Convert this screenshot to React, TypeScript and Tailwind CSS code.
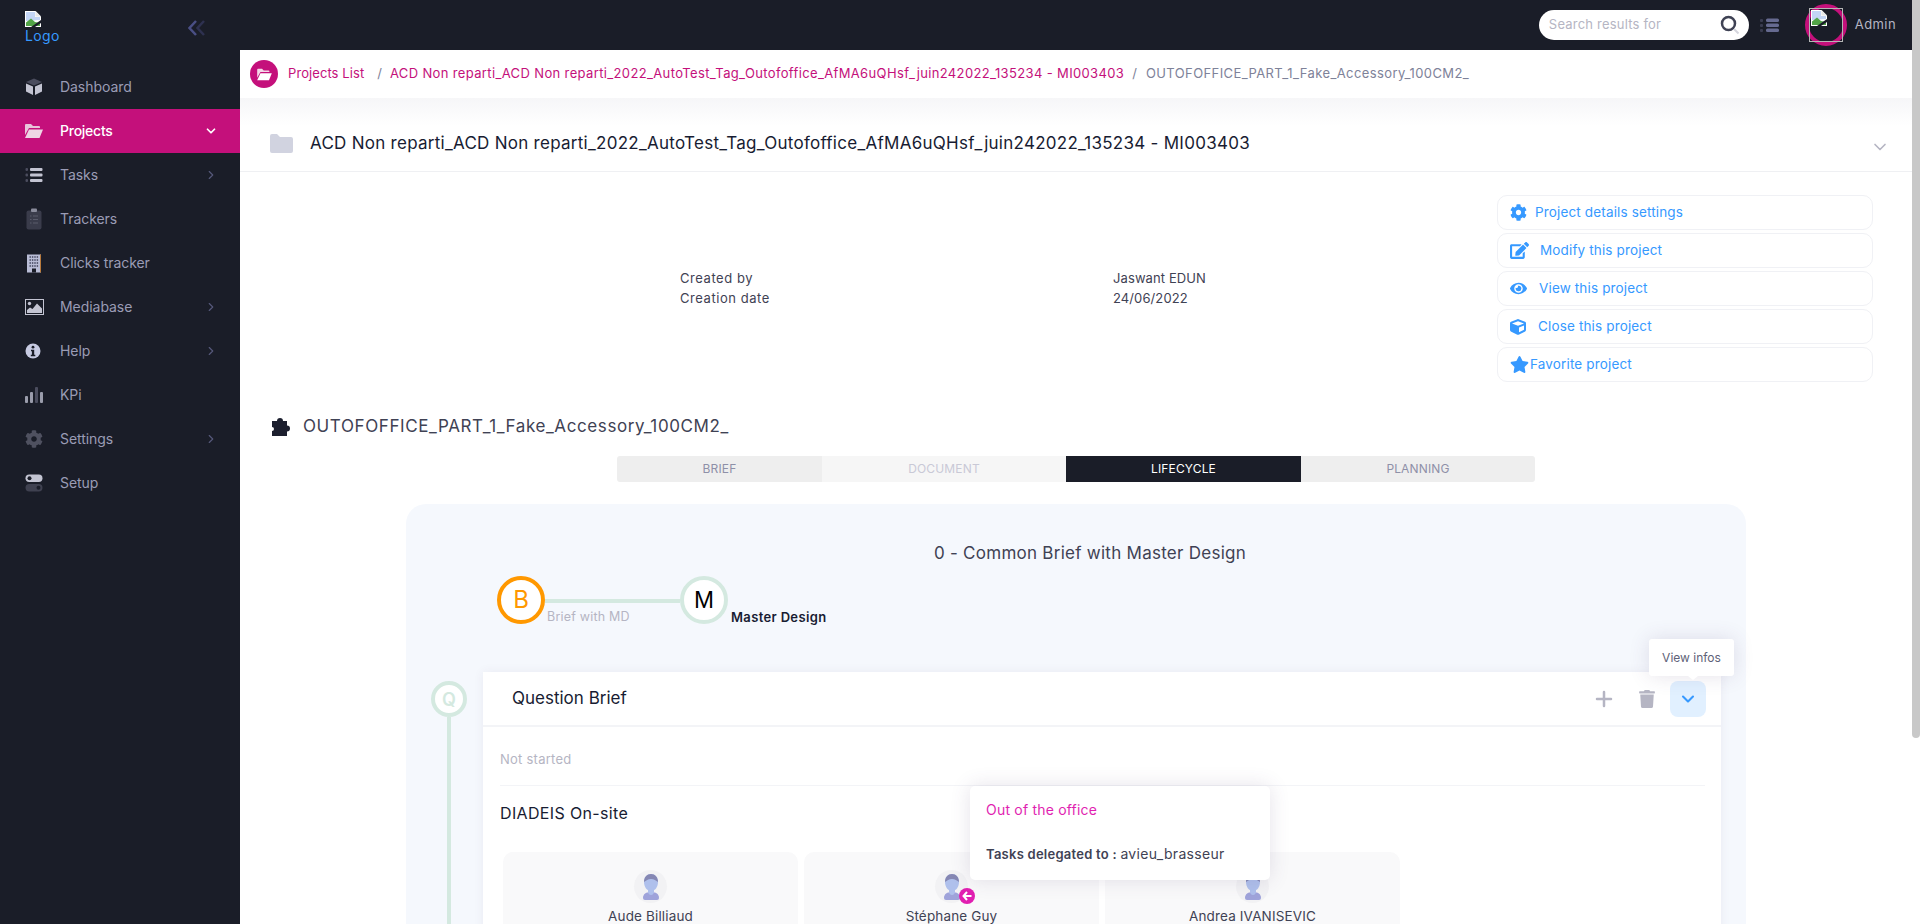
import React from 'react';
import { FaCog, FaEdit, FaEye, FaCube, FaStar, FaTrash } from 'react-icons/fa';
import { ChevronDown, ChevronRight, Plus } from 'lucide-react';

// Chrome's "image failed to load" glyph
const BrokenImage = () => (
  <svg width="16" height="16" viewBox="0 0 16 16" className="shrink-0">
    <path d="M0 0h10.5L16 5.5V16H0z" fill="#fff" />
    <path d="M1 1h9v5h5v3L1 10z" fill="#c3d5f5" />
    <path d="M1 15v-3.5l5-4 4 3.5 5 1v3z" fill="#52a447" />
    <path d="M16 9 6 16h4l6-4z" fill="#1a1d28" />
    <path d="M10.5 0v5.5H16z" fill="#e8e8e8" />
  </svg>
);

const NavIcon = ({ name }: { name: string }) => {
  const light = '#c3c4d2';
  const dark = '#4b4d5e';
  switch (name) {
    case 'dashboard':
      return (
        <svg width="18" height="18" viewBox="0 0 18 18">
          <path d="M9 0.5 17 4 9 7.5 1 4z" fill={dark} />
          <path d="M1 5.5 8 8.6V17L1 13.5z" fill={light} />
          <path d="M17 5.5 10 8.6V17l7-3.5z" fill={light} />
        </svg>
      );
    case 'projects':
      return (
        <svg width="18" height="18" viewBox="0 0 18 16">
          <path d="M0 2a1 1 0 0 1 1-1h5l2 2h6a1 1 0 0 1 1 1v1H4L0 12z" fill="#e8c3da" />
          <path d="M4 6.5h14L14.5 15H0z" fill="#eed5e4" />
        </svg>
      );
    case 'tasks':
      return (
        <svg width="18" height="18" viewBox="0 0 18 18">
          <rect x="0.5" y="2" width="2.5" height="3" rx="1" fill={dark} />
          <rect x="0.5" y="7.5" width="2.5" height="3" rx="1" fill={dark} />
          <rect x="0.5" y="13" width="2.5" height="3" rx="1" fill={dark} />
          <rect x="5" y="2" width="12.5" height="3" rx="1" fill={light} />
          <rect x="5" y="7.5" width="12.5" height="3" rx="1" fill={light} />
          <rect x="5" y="13" width="12.5" height="3" rx="1" fill={light} />
        </svg>
      );
    case 'trackers':
      return (
        <svg width="18" height="22" viewBox="0 0 18 22">
          <rect x="1.5" y="2.5" width="15" height="19" rx="2" fill="#3a3c4b" />
          <rect x="6" y="0.5" width="6" height="3.5" rx="1" fill="#8a8c9c" />
          <path d="M5 8h1.5M8 8h5M5 11.5h1.5M8 11.5h5M5 15h1.5M8 15h5" stroke="#5a5c6c" strokeWidth="1.2" />
        </svg>
      );
    case 'clicks':
      return (
        <svg width="18" height="19" viewBox="0 0 18 19">
          <rect x="2" y="0.5" width="14" height="18" fill="#b9bdd6" />
          <rect x="15" y="0.5" width="1" height="18" fill="#b87a3c" />
          <path d="M4.500 3h9M4.500 6h9M4.500 9h9M4.500 12h9" stroke="#3e4058" strokeWidth="1.400" strokeDasharray="1.400 1" />
          <rect x="7" y="14.500" width="4" height="4" fill="#1a1d28" />
        </svg>
      );
    case 'media':
      return (
        <svg width="19" height="16" viewBox="0 0 19 16">
          <rect x="0.500" y="0.500" width="18" height="15" fill="none" stroke={light} />
          <circle cx="4.500" cy="4.500" r="1.700" fill={light} />
          <path d="M2 14v-3l3-2.500 2.500 1.500L12 4.500l5 5V14z" fill={light} />
        </svg>
      );
    case 'help':
      return (
        <svg width="16" height="16" viewBox="0 0 16 16">
          <circle cx="8" cy="8" r="7.500" fill="#c7cbe2" />
          <circle cx="8" cy="4.200" r="1.400" fill="#1a1d28" />
          <path d="M6 6.800h3.200v5H10.300v1.400H5.800v-1.400h1.100V8.200H6z" fill="#1a1d28" />
        </svg>
      );
    case 'kpi':
      return (
        <svg width="18" height="16" viewBox="0 0 18 16">
          <rect x="0" y="9" width="3" height="7" rx="1" fill="#9a9cab" />
          <rect x="5" y="5" width="3" height="11" rx="1" fill="#9a9cab" />
          <rect x="10" y="0" width="3" height="16" rx="1" fill="#4b4d5e" />
          <rect x="15" y="5" width="3" height="11" rx="1" fill="#9a9cab" />
        </svg>
      );
    case 'settings':
      return <FaCog size={18} color="#4f5160" />;
    default:
      return (
        <svg width="18" height="18" viewBox="0 0 18 18">
          <rect x="0.500" y="0.500" width="17" height="7.500" rx="3.700" fill={light} />
          <circle cx="4.500" cy="4.200" r="2" fill="#1a1d28" />
          <rect x="0.500" y="10" width="17" height="7.500" rx="3.700" fill="#3f4150" />
          <circle cx="13.500" cy="13.700" r="2" fill="#1a1d28" />
        </svg>
      );
  }
};

const navItems = [
  { icon: 'dashboard', label: 'Dashboard' },
  { icon: 'projects', label: 'Projects', active: true },
  { icon: 'tasks', label: 'Tasks', arrow: true },
  { icon: 'trackers', label: 'Trackers' },
  { icon: 'clicks', label: 'Clicks tracker' },
  { icon: 'media', label: 'Mediabase', arrow: true },
  { icon: 'help', label: 'Help', arrow: true },
  { icon: 'kpi', label: 'KPi' },
  { icon: 'settings', label: 'Settings', arrow: true },
  { icon: 'setup', label: 'Setup' },
];

const actions = [
  { icon: <FaCog size={17} />, label: 'Project details settings', gap: 'ml-[8px]' },
  { icon: <FaEdit size={19} />, label: 'Modify this project', gap: 'ml-[11px]' },
  { icon: <FaEye size={17} />, label: 'View this project', gap: 'ml-[12px]' },
  { icon: <FaCube size={16} />, label: 'Close this project', gap: 'ml-[12px]' },
  { icon: <FaStar size={19} />, label: 'Favorite project', gap: 'ml-[1px]' },
];

const Avatar = () => (
  <div className="w-[33px] h-[33px] rounded-full bg-[#f2f2f4] flex items-center justify-center">
    <svg width="20" height="26" viewBox="0 0 20 26">
      <path d="M2 24c0-4 3-6 8-6s8 2 8 6a2 2 0 0 1-2 2H4a2 2 0 0 1-2-2z" fill="#9fa3da" />
      <path d="M7 14h6v4c0 1.500-1.300 3-3 3s-3-1.500-3-3z" fill="#afc0ec" />
      <path d="M3 8c0-5 3-8 7-8s7 3 7 8c0 5-3 9-7 9S3 13 3 8z" fill="#afc0ec" />
      <path d="M3 8c0-5 3-8 7-8s7 3 7 8c-2-1.500-4-3-7-3S5 6.500 3 8z" fill="#8587b3" />
    </svg>
  </div>
);

const people = ['Aude Billiaud', 'Stéphane Guy', 'Andrea IVANISEVIC'];

export default function App() {
  return (
    <div className="h-[924px] w-[1920px] overflow-hidden flex bg-white font-[family-name:Inter,sans-serif] text-[13px] text-[#3f4254]">
      <aside className="w-[240px] shrink-0 bg-[#1a1d28]">
        <div className="h-[65px] pl-[25px] pr-[35px] pt-[11px] flex justify-between">
          <div className="text-[#3699ff] text-[14px] leading-[18px]">
            <BrokenImage />
            <div className="tracking-[0.4px]">Logo</div>
          </div>
          <svg width="17" height="16" viewBox="0 0 17 16" className="mt-[9px]" fill="none" strokeWidth="2.500">
            <path d="M16 1 9.500 8l6.500 7" stroke="#2e3150" />
            <path d="M8 1 1.500 8 8 15" stroke="#4a4f85" />
          </svg>
        </div>
        <nav>
          {navItems.map((item) => (
            <div
              key={item.label}
              className={`h-[44px] flex items-center pl-[25px] pr-[22px] text-[14px] ${
                item.active ? 'bg-[#c4107b] text-white font-medium tracking-[-0.25px]' : 'text-[#9a9cb5] tracking-[-0.05px]'
              }`}
            >
              <span className="w-[35px] shrink-0 flex items-center">
                <NavIcon name={item.icon} />
              </span>
              <span className="flex-1 pb-[2px]">{item.label}</span>
              {item.active && <ChevronDown size={14} strokeWidth={3} className="text-white" />}
              {item.arrow && <ChevronRight size={14} className="text-[#55587a]" />}
            </div>
          ))}
        </nav>
      </aside>

      <div className="flex-1 min-w-0 flex flex-col">
        <header className="h-[50px] shrink-0 bg-[#1a1d28] flex items-center">
          <div className="ml-auto w-[210px] h-[30px] rounded-full bg-white flex items-center pl-[10px] pr-[9px] text-[#b5b5c3] tracking-[0.2px]">
            <span className="flex-1">Search results for</span>
            <svg width="20" height="20" viewBox="0 0 20 20">
              <circle cx="8.500" cy="8.500" r="6.500" fill="none" stroke="#3f4254" strokeWidth="2.500" />
              <path d="M14 14l4.500 4.500" stroke="#d5d5dd" strokeWidth="2" />
            </svg>
          </div>
          <svg width="19" height="15" viewBox="0 0 19 15" className="ml-[11px]">
            <g fill="#3a3c50">
              <rect x="0" y="1" width="3" height="3" rx="1" />
              <rect x="0" y="6" width="3" height="3" rx="1" />
              <rect x="0" y="11" width="3" height="3" rx="1" />
            </g>
            <g fill="#666a90">
              <rect x="6" y="0.500" width="13" height="3.500" rx="1.500" />
              <rect x="6" y="5.500" width="13" height="3.500" rx="1.500" />
              <rect x="6" y="10.500" width="13" height="3.500" rx="1.500" />
            </g>
          </svg>
          <div className="relative ml-[26px] w-[42px] h-[42px] rounded-full border-[4px] border-[#c4107b]">
            <div className="absolute left-0 top-0 w-[34px] h-[34px] border border-[#b5b5b5] p-[1px]">
              <BrokenImage />
            </div>
          </div>
          <span className="ml-[8px] mr-[16px] text-[#b5b5c3] text-[13px] tracking-[0.4px]">Admin</span>
        </header>

        <main className="flex-1 min-h-0 bg-white">
          <div className="h-[48px] rounded-l-[24px] bg-white flex items-center pl-[10px] whitespace-nowrap text-[13px]">
            <span className="w-[28px] h-[28px] rounded-full bg-[#c4107b] flex items-center justify-center">
              <svg width="15" height="13" viewBox="0 0 18 16">
                <path d="M0 2a1 1 0 0 1 1-1h5l2 2h6a1 1 0 0 1 1 1v1H4L0 12z" fill="#f4d9e8" />
                <path d="M4 6.500h14L14.500 15H0z" fill="#fff" />
              </svg>
            </span>
            <span className="ml-[10px] text-[#c4107b] tracking-[0.08px]">Projects List</span>
            <span className="ml-[13px] text-[#7e8299]">/</span>
            <span className="ml-[8px] text-[#c4107b] tracking-[0.36px]">
              ACD Non reparti_ACD Non reparti_2022_AutoTest_Tag_Outofoffice_AfMA6uQHsf_juin242022_135234 - MI003403
            </span>
            <span className="ml-[8px] text-[#7e8299]">/</span>
            <span className="ml-[9px] text-[#7e8299] tracking-[0.4px]">OUTOFOFFICE_PART_1_Fake_Accessory_100CM2_</span>
          </div>

          <div className="h-[74px] border-b border-[#eff0f3] bg-gradient-to-b from-[#f6f6f8] to-white to-[38%] flex items-center pl-[30px] pr-[22px] pt-[18px]">
            <svg width="23" height="19" viewBox="0 0 23 19" className="shrink-0">
              <path d="M0 2a2 2 0 0 1 2-2h5l3 3h11a2 2 0 0 1 2 2v12a2 2 0 0 1-2 2H2a2 2 0 0 1-2-2z" fill="#d1d3e0" />
            </svg>
            <h1 className="ml-[17px] flex-1 text-[17px] font-normal text-[#181c32] tracking-[0.27px] whitespace-nowrap">
              ACD Non reparti_ACD Non reparti_2022_AutoTest_Tag_Outofoffice_AfMA6uQHsf_juin242022_135234 - MI003403
            </h1>
            <ChevronDown size={20} className="text-[#b5b5c3] mt-[6px]" />
          </div>

          <div className="flex justify-between pl-[440px] pr-[39px] pt-[23px]">
            <div className="flex mt-[73px] leading-[20px] text-[13px] tracking-[0.1px]">
              <div className="w-[433px] tracking-[0.55px]">
                <div>Created by</div>
                <div>Creation date</div>
              </div>
              <div>
                <div>Jaswant EDUN</div>
                <div>24/06/2022</div>
              </div>
            </div>
            <div className="w-[376px] flex flex-col gap-[3px]">
              {actions.map((a) => (
                <div
                  key={a.label}
                  className="h-[35px] border border-[#f0f1f5] rounded-[10px] flex items-center pl-[12px] text-[#3699ff] text-[13.500px] tracking-[0.15px]"
                >
                  {a.icon}
                  <span className={a.gap}>{a.label}</span>
                </div>
              ))}
            </div>
          </div>

          <div className="flex items-center h-[24px] mt-[32px] pl-[31px] text-[17px] tracking-[0.6px] text-[#3f4254]">
            <svg width="20" height="19" viewBox="0 0 20 19" className="shrink-0">
              <path d="M1 4h5a3 3 0 1 1 6 0h4v4.500a3 3 0 1 1 0 6V19H1v-5a2 2 0 0 0 0-4z" fill="#1c1f2e" />
            </svg>
            <span className="ml-[12px] pt-[2px]">OUTOFOFFICE_PART_1_Fake_Accessory_100CM2_</span>
          </div>

          <div className="ml-[377px] mt-[18px] w-[918px] h-[26px] flex text-[12px] tracking-[0.15px] rounded-[3px] overflow-hidden">
            <div className="w-[205px] bg-[#eeeeee] text-[#8e90a8] flex items-center justify-center">BRIEF</div>
            <div className="w-[244px] bg-[#f6f6f6] text-[#c9c9d6] flex items-center justify-center">DOCUMENT</div>
            <div className="w-[235px] bg-[#1a1d28] text-white flex items-center justify-center">LIFECYCLE</div>
            <div className="w-[234px] bg-[#eeeeee] text-[#8e90a8] flex items-center justify-center">PLANNING</div>
          </div>

          <section className="ml-[166px] mt-[22px] w-[1340px] h-[500px] rounded-t-[20px] bg-[#f5f8fd] pt-[37px]">
            <h2 className="pl-[28px] text-center text-[17px] leading-[24px] font-normal tracking-[0.26px] text-[#3f4254]">
              0 - Common Brief with Master Design
            </h2>

            <div className="flex mt-[11px] pl-[91px]">
              <div className="w-[48px] h-[48px] rounded-full border-[4px] border-[#ff9800] bg-white text-[#ff9800] text-[24px] flex items-center justify-center">
                B
              </div>
              <div className="w-[135px] pt-[23px]">
                <div className="h-[4px] bg-[#d4e9e0]" />
                <div className="mt-[4px] pl-[2px] leading-[20px] text-[12.500px] tracking-[0.2px] text-[#b5b5c3]">Brief with MD</div>
              </div>
              <div className="w-[48px] h-[48px] rounded-full border-[4px] border-[#d4e9e0] bg-white text-[#000] text-[24px] flex items-center justify-center font-[family-name:'Liberation_Sans',sans-serif]">
                M
              </div>
              <div className="pt-[31px] pl-[3px] leading-[20px] text-[13px] font-semibold tracking-[0.35px] text-[#181c32]">Master Design</div>
            </div>

            <div className="flex mt-[45px] pl-[25px]">
              <div className="w-[36px] mr-[16px] pt-[9px] flex flex-col items-center">
                <div className="w-[36px] h-[36px] shrink-0 rounded-full border-[4px] border-[#d4e9e0] bg-white text-[#d4e9e0] text-[18px] font-semibold flex items-center justify-center">
                  Q
                </div>
                <div className="w-[4px] flex-1 bg-[#d4e9e0]" />
              </div>

              <div className="w-[1238px] h-[400px] bg-white shadow-[0_0_10px_rgba(82,63,105,0.07)]">
                <div className="h-[55px] border-b-2 border-[#f3f4f7] flex items-center pl-[29px] pr-[15px] pt-[1px]">
                  <span className="flex-1 text-[17px] text-[#181c32]">Question Brief</span>
                  <Plus size={24} strokeWidth={2.500} className="text-[#b5b5c3]" />
                  <FaTrash size={18} className="text-[#b5b5c3] ml-[22px]" />
                  <div className="relative ml-[14px] w-[36px] h-[36px] rounded-[8px] bg-[#e1f0ff] flex items-center justify-center">
                    <ChevronDown size={20} strokeWidth={2.500} className="text-[#3699ff]" />
                    <div className="absolute -left-[21px] -top-[42px] w-[85px] h-[37px] rounded-[3px] bg-white shadow-[0_0_20px_rgba(82,63,105,0.15)] flex items-center justify-center text-[12px] text-[#5e6278]">
                      View infos
                      <span className="absolute -bottom-[4px] left-[39px] w-0 h-0 border-x-[5px] border-x-transparent border-t-[4px] border-t-white" />
                    </div>
                  </div>
                </div>

                <div className="pl-[17px] pr-[16px]">
                  <div className="pt-[22px] pb-[16px] border-b border-[#f3f4f7] leading-[20px] text-[#b5b5c3] tracking-[0.25px]">Not started</div>
                  <div className="mt-[15px] text-[16px] leading-[24px] text-[#181c32] tracking-[0.35px]">DIADEIS On-site</div>
                  <div className="mt-[27px] ml-[3px] flex gap-[6px]">
                    {people.map((name, i) => (
                      <div key={name} className="relative w-[295px] h-[150px] rounded-[10px] bg-[#f9f9fa] pt-[18px] flex flex-col items-center">
                        <div className="relative">
                          <Avatar />
                          {i === 1 && (
                            <span className="absolute -right-[7px] bottom-[-1px] w-[16px] h-[16px] rounded-full bg-[#e11fb1] flex items-center justify-center">
                              <svg width="10" height="10" viewBox="0 0 10 10">
                                <path d="M5 1 1.500 5 5 9M1.500 5H9.500" fill="none" stroke="#fff" strokeWidth="2" />
                              </svg>
                            </span>
                          )}
                        </div>
                        <div className="mt-[5px] leading-[16px] text-[13.500px] text-[#3f4254] tracking-[0.15px]">{name}</div>
                        {i === 1 && (
                          <div className="absolute z-10 left-[166px] -top-[66px] w-[300px] h-[94px] rounded-[5px] bg-white shadow-[0_0_20px_rgba(82,63,105,0.15)] pl-[16px] pt-[14px]">
                            <div className="leading-[20px] text-[14px] text-[#e11fb1] tracking-[0.2px]">Out of the office</div>
                            <div className="mt-[24px] leading-[20px] text-[13px] whitespace-nowrap">
                              <span className="font-semibold tracking-[0.25px]">Tasks delegated to : </span>
                              <span className="text-[14px] tracking-[0.3px]">avieu_brasseur</span>
                            </div>
                          </div>
                        )}
                      </div>
                    ))}
                  </div>
                </div>
              </div>
            </div>
          </section>
        </main>
      </div>

      <div className="w-[8px] shrink-0 bg-white">
        <div className="h-[738px] bg-[#c8c8c8] rounded-b-[4px]" />
      </div>
    </div>
  );
}
